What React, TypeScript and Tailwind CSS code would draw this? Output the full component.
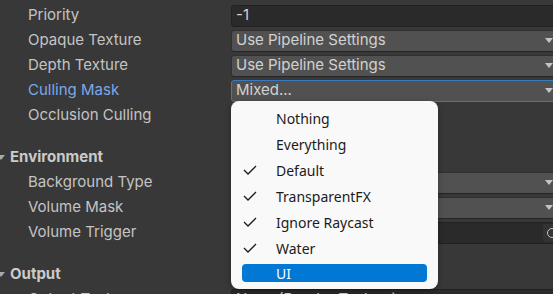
import React from "react";

const Arrow = () => (
  <svg width="8" height="6" viewBox="0 0 8 6" className="shrink-0">
    <path d="M0 0 L8 0 L4 5 Z" fill="#c4c4c4" />
  </svg>
);

const Check = () => (
  <svg width="14" height="10" viewBox="0 0 14 10">
    <path d="M1 5 L5 9 L13 1" fill="none" stroke="#1b1b1b" strokeWidth="1.3" />
  </svg>
);

function Row({ label, children, blue }: { label: string; children?: React.ReactNode; blue?: boolean }) {
  return (
    <div className="flex h-[25px] items-center">
      <div className={`w-[231px] shrink-0 pl-[28px] ${blue ? "text-[#7ca8e8]" : "text-[#c4c4c4]"}`}>{label}</div>
      <div className="flex-1 min-w-0">{children}</div>
    </div>
  );
}

function Dropdown({ text, focused }: { text?: string; focused?: boolean }) {
  return (
    <div
      className={`flex h-[22px] items-center justify-between rounded-[3px] border bg-[#515151] pl-[4px] pr-[3px] ${
        focused ? "border-[#3a79bb]" : "border-[#303030] border-b-[#242424]"
      }`}
    >
      <span className="text-[#d2d2d2] truncate">{text}</span>
      <Arrow />
    </div>
  );
}

function Header({ label }: { label: string }) {
  return (
    <div className="flex h-[25px] items-center">
      <svg width="8" height="6" viewBox="0 0 8 6" className="ml-[-3px] mr-[5px]">
        <path d="M0 0 L8 0 L4 5 Z" fill="#a8a8a8" />
      </svg>
      <span className="font-bold text-[#cbcbcb]">{label}</span>
    </div>
  );
}

export default function App() {
  const items: { t: string; c: boolean; sel?: boolean }[] = [
    { t: "Nothing", c: false },
    { t: "Everything", c: false },
    { t: "Default", c: true },
    { t: "TransparentFX", c: true },
    { t: "Ignore Raycast", c: true },
    { t: "Water", c: true },
    { t: "UI", c: false, sel: true },
  ];
  return (
    <div
      className="relative h-[294px] w-[553px] overflow-hidden bg-[#383838] text-[15px]"
      style={{ fontFamily: "Inter, 'Noto Sans', sans-serif" }}
    >
      <div className="pt-[3px] w-[557px]">
        <Row label="Priority">
          <div className="flex h-[22px] items-center rounded-[3px] border border-[#212121] bg-[#2a2a2a] pl-[4px] text-[#d2d2d2]">
            -1
          </div>
        </Row>
        <Row label="Opaque Texture">
          <Dropdown text="Use Pipeline Settings" />
        </Row>
        <Row label="Depth Texture">
          <Dropdown text="Use Pipeline Settings" />
        </Row>
        <Row label="Culling Mask" blue>
          <Dropdown text="Mixed..." focused />
        </Row>
        <Row label="Occlusion Culling" />
        <div className="h-[17px]" />
        <Header label="Environment" />
        <Row label="Background Type">
          <Dropdown />
        </Row>
        <Row label="Volume Mask">
          <Dropdown />
        </Row>
        <Row label="Volume Trigger">
          <div className="mr-[-6px] flex h-[22px] items-center justify-end rounded-[3px] border border-[#212121] bg-[#2a2a2a]">
            <div className="mr-[1px] flex h-[18px] w-[18px] items-center justify-center rounded-[2px] bg-[#333]">
              <div className="h-[10px] w-[10px] rounded-full border-[1.5px] border-[#c4c4c4]" />
            </div>
          </div>
        </Row>
        <div className="h-[17px]" />
        <Header label="Output" />
        <Row label="Output Texture">
          <div className="flex h-[22px] items-center rounded-[3px] border border-[#212121] bg-[#2a2a2a] pl-[4px] text-[#d2d2d2]">
            None (Render Texture)
          </div>
        </Row>
      </div>

      <div
        className="absolute left-[231px] top-[101px] w-[207px] rounded-[8px] bg-[#f9f9f9] pt-[4px] pb-[7px] px-[11px] shadow-[0_2px_6px_rgba(0,0,0,0.3)] text-[14px]"
        style={{ fontFamily: "'Segoe UI', 'Noto Sans', 'Open Sans', sans-serif" }}
      >
        {items.map((it) =>
          it.sel ? (
            <div key={it.t} className="mt-[3px] flex h-[18px] items-center rounded-[4px] bg-[#0078d4] text-white">
              <div className="w-[34px] shrink-0" />
              <span>{it.t}</span>
            </div>
          ) : (
            <div key={it.t} className="flex h-[26px] items-center text-[#1b1b1b]">
              <div className="flex w-[34px] shrink-0 justify-start pl-[1px]">{it.c ? <Check /> : null}</div>
              <span>{it.t}</span>
            </div>
          )
        )}
      </div>
    </div>
  );
}
